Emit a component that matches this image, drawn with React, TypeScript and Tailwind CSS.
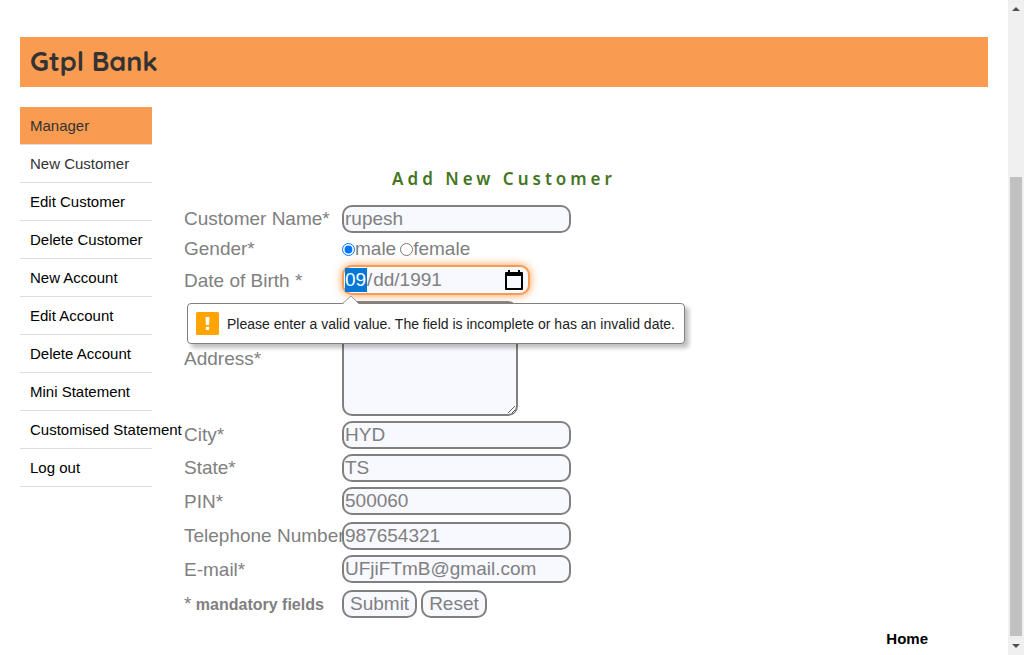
import { useState } from "react";
import type { ReactNode } from "react";

const MENU = [
  "New Customer",
  "Edit Customer",
  "Delete Customer",
  "New Account",
  "Edit Account",
  "Delete Account",
  "Mini Statement",
  "Customised Statement",
  "Log out",
];

const FIELD =
  "block h-7 w-[229px] rounded-[10px] border-2 border-[#808080] bg-[#f8f8ff] px-px text-[19px] leading-6 text-[#808080] outline-none";

const BUTTON =
  "h-7 rounded-[10px] border-2 border-[#808080] bg-[#f8f8ff] px-[6px] text-[19px] leading-6 text-[#808080]";

function TextRow({ id, label, value, tall }: { id: string; label: string; value: string; tall?: boolean }) {
  return (
    <>
      <label htmlFor={id} className="self-center whitespace-nowrap">
        {label}
      </label>
      <div className={tall ? "h-[30px]" : "h-7"}>
        <input id={id} type="text" defaultValue={value} className={FIELD} />
      </div>
    </>
  );
}

function Sidebar() {
  return (
    <nav className="w-[132px] shrink-0 text-[15px] leading-[37px]">
      <ul>
        <li className="border-b border-[#dddddd]">
          <a href="#manager" className="block whitespace-nowrap bg-[#f99b50] pl-[10px] text-[#333333]">
            Manager
          </a>
        </li>
        {MENU.map((item, i) => (
          <li key={item} className="border-b border-[#dddddd]">
            <a
              href="#menu"
              className={
                i === 0
                  ? "block whitespace-nowrap pl-[10px] text-[#333333]"
                  : "block whitespace-nowrap pl-[10px] text-black"
              }
            >
              {item}
            </a>
          </li>
        ))}
      </ul>
    </nav>
  );
}

function ValidationBubble({ children }: { children: ReactNode }) {
  return (
    <div
      role="alert"
      className="absolute -left-[155px] top-[38px] z-10 flex h-[41px] items-center gap-2 whitespace-nowrap rounded-[4px] border border-[#808080] bg-white pl-2 pr-[9px] text-[14px] leading-5 text-[#222222] shadow-[4px_4px_4px_rgba(0,0,0,0.25)]"
    >
      <svg className="absolute -top-[9px] left-[154px]" width="18" height="10" viewBox="0 0 18 10" aria-hidden="true">
        <path d="M0 10 L9 1 L18 10 Z" fill="#ffffff" />
        <path d="M0 9 L9 1 L17 9" fill="none" stroke="#999999" />
      </svg>
      <svg width="23" height="23" viewBox="0 0 23 23" aria-hidden="true">
        <rect width="23" height="23" rx="1.5" fill="#ffa400" />
        <path d="M9.500 5h4l-.4 8h-3.200z" fill="#ffffff" />
        <rect x="9.800" y="14.800" width="3.400" height="3.200" rx="1" fill="#ffffff" />
      </svg>
      <span>{children}</span>
    </div>
  );
}

function BirthDate() {
  return (
    <div className="relative h-[31px]">
      <div
        role="group"
        aria-labelledby="dob-label"
        className="flex h-[30px] w-[188px] items-center rounded-[10px] border-2 border-[#f99b50] bg-[#f8f8ff] pl-px pr-[5px] leading-6 shadow-[0_0_10px_#f99b50]"
      >
        <input
          aria-label="Month"
          defaultValue="09"
          className="h-6 w-[22px] bg-[#0078d7] text-[19px] text-white outline-none"
        />
        <span className="pr-px">/</span>
        <input
          aria-label="Day"
          defaultValue="dd"
          className="h-6 w-[21px] bg-transparent text-[19px] outline-none"
        />
        <span>/</span>
        <input
          aria-label="Year"
          defaultValue="1991"
          className="h-6 w-[44px] bg-transparent text-[19px] outline-none"
        />
        <button type="button" aria-label="Show date picker" className="ml-auto">
          <svg width="18" height="20" viewBox="0 0 18 20" aria-hidden="true">
            <path
              fill="#000000"
              fillRule="evenodd"
              d="M3 0h2v2h8V0h2v2h2a1 1 0 0 1 1 1v16a1 1 0 0 1-1 1H1a1 1 0 0 1-1-1V3a1 1 0 0 1 1-1h2zM2 6v12h14V6z"
            />
          </svg>
        </button>
      </div>
      <ValidationBubble>
        Please enter a valid value. The field is incomplete or has an invalid date.
      </ValidationBubble>
    </div>
  );
}

function CustomerForm() {
  const [gender, setGender] = useState("male");
  return (
    <form
      onSubmit={(e) => e.preventDefault()}
      className="grid grid-cols-[158px_1fr] gap-y-[5px] text-[19px] leading-[22px] text-[#808080]"
    >
      <TextRow id="name" label="Customer Name*" value="rupesh" />

      <span className="self-center">Gender*</span>
      <div className="flex items-center">
        <input
          id="male"
          type="radio"
          name="gender"
          checked={gender === "male"}
          onChange={() => setGender("male")}
          className="size-[13px]"
        />
        <label htmlFor="male" className="mr-1">
          male
        </label>
        <input
          id="female"
          type="radio"
          name="gender"
          checked={gender === "female"}
          onChange={() => setGender("female")}
          className="size-[13px]"
        />
        <label htmlFor="female">female</label>
      </div>

      <span id="dob-label" className="self-center">
        Date of Birth *
      </span>
      <BirthDate />

      <label htmlFor="address" className="self-center">
        Address*
      </label>
      <textarea
        id="address"
        className="block h-[115px] w-[176px] rounded-[10px] border-2 border-[#808080] bg-[#f8f8ff] p-[2px] outline-none"
      />

      <TextRow id="city" label="City*" value="HYD" />
      <TextRow id="state" label="State*" value="TS" />
      <TextRow id="pin" label="PIN*" value="500060" tall />
      <TextRow id="phone" label="Telephone Number" value="987654321" />
      <TextRow id="email" label="E-mail*" value="UFjiFTmB@gmail.com" tall />

      <span className="self-center text-[16px] font-bold">
        <span className="text-[19px] font-normal">*</span> mandatory fields
      </span>
      <div className="flex gap-1">
        <button type="submit" className={BUTTON}>
          Submit
        </button>
        <button type="reset" className={BUTTON}>
          Reset
        </button>
      </div>
    </form>
  );
}

function ScrollRail() {
  return (
    <div className="flex w-4 shrink-0 flex-col items-center bg-[#f0f0f0]" aria-hidden="true">
      <svg className="shrink-0" width="16" height="17" viewBox="0 0 16 17">
        <path d="M4 11 L8 7 L12 11 Z" fill="#505050" />
      </svg>
      <div className="h-40 shrink-0" />
      <div className="w-3 grow bg-[#c1c1c1]" />
      <svg className="shrink-0" width="16" height="19" viewBox="0 0 16 19">
        <path d="M4 8 L12 8 L8 12 Z" fill="#505050" />
      </svg>
    </div>
  );
}

export default function App() {
  return (
    <div className="flex h-screen overflow-hidden bg-white font-['Liberation_Sans',Arial,sans-serif]">
      <div className="min-w-0 flex-1 pl-5 pr-5 pt-[37px]">
        <header className="flex h-[50px] items-center bg-[#f99b50] px-[10px] pb-[2px]">
          <h1 className="font-['Quicksand','Lato',sans-serif] text-[27px] font-bold leading-8 text-[#333333]">
            Gtpl Bank
          </h1>
        </header>
        <div className="mt-5 flex gap-8">
          <Sidebar />
          <main className="max-w-[640px] flex-1 pt-[60px]">
            <h2 className="mb-[15px] text-center font-['Noto_Sans',sans-serif] text-[17px] font-semibold leading-[23px] tracking-[4px] text-[#44761f]">
              Add New Customer
            </h2>
            <CustomerForm />
          </main>
        </div>
        <footer className="mt-[11px] flex justify-end pr-[60px] text-[15px] font-bold leading-5">
          <a href="#home" className="text-black">
            Home
          </a>
        </footer>
      </div>
      <ScrollRail />
    </div>
  );
}
